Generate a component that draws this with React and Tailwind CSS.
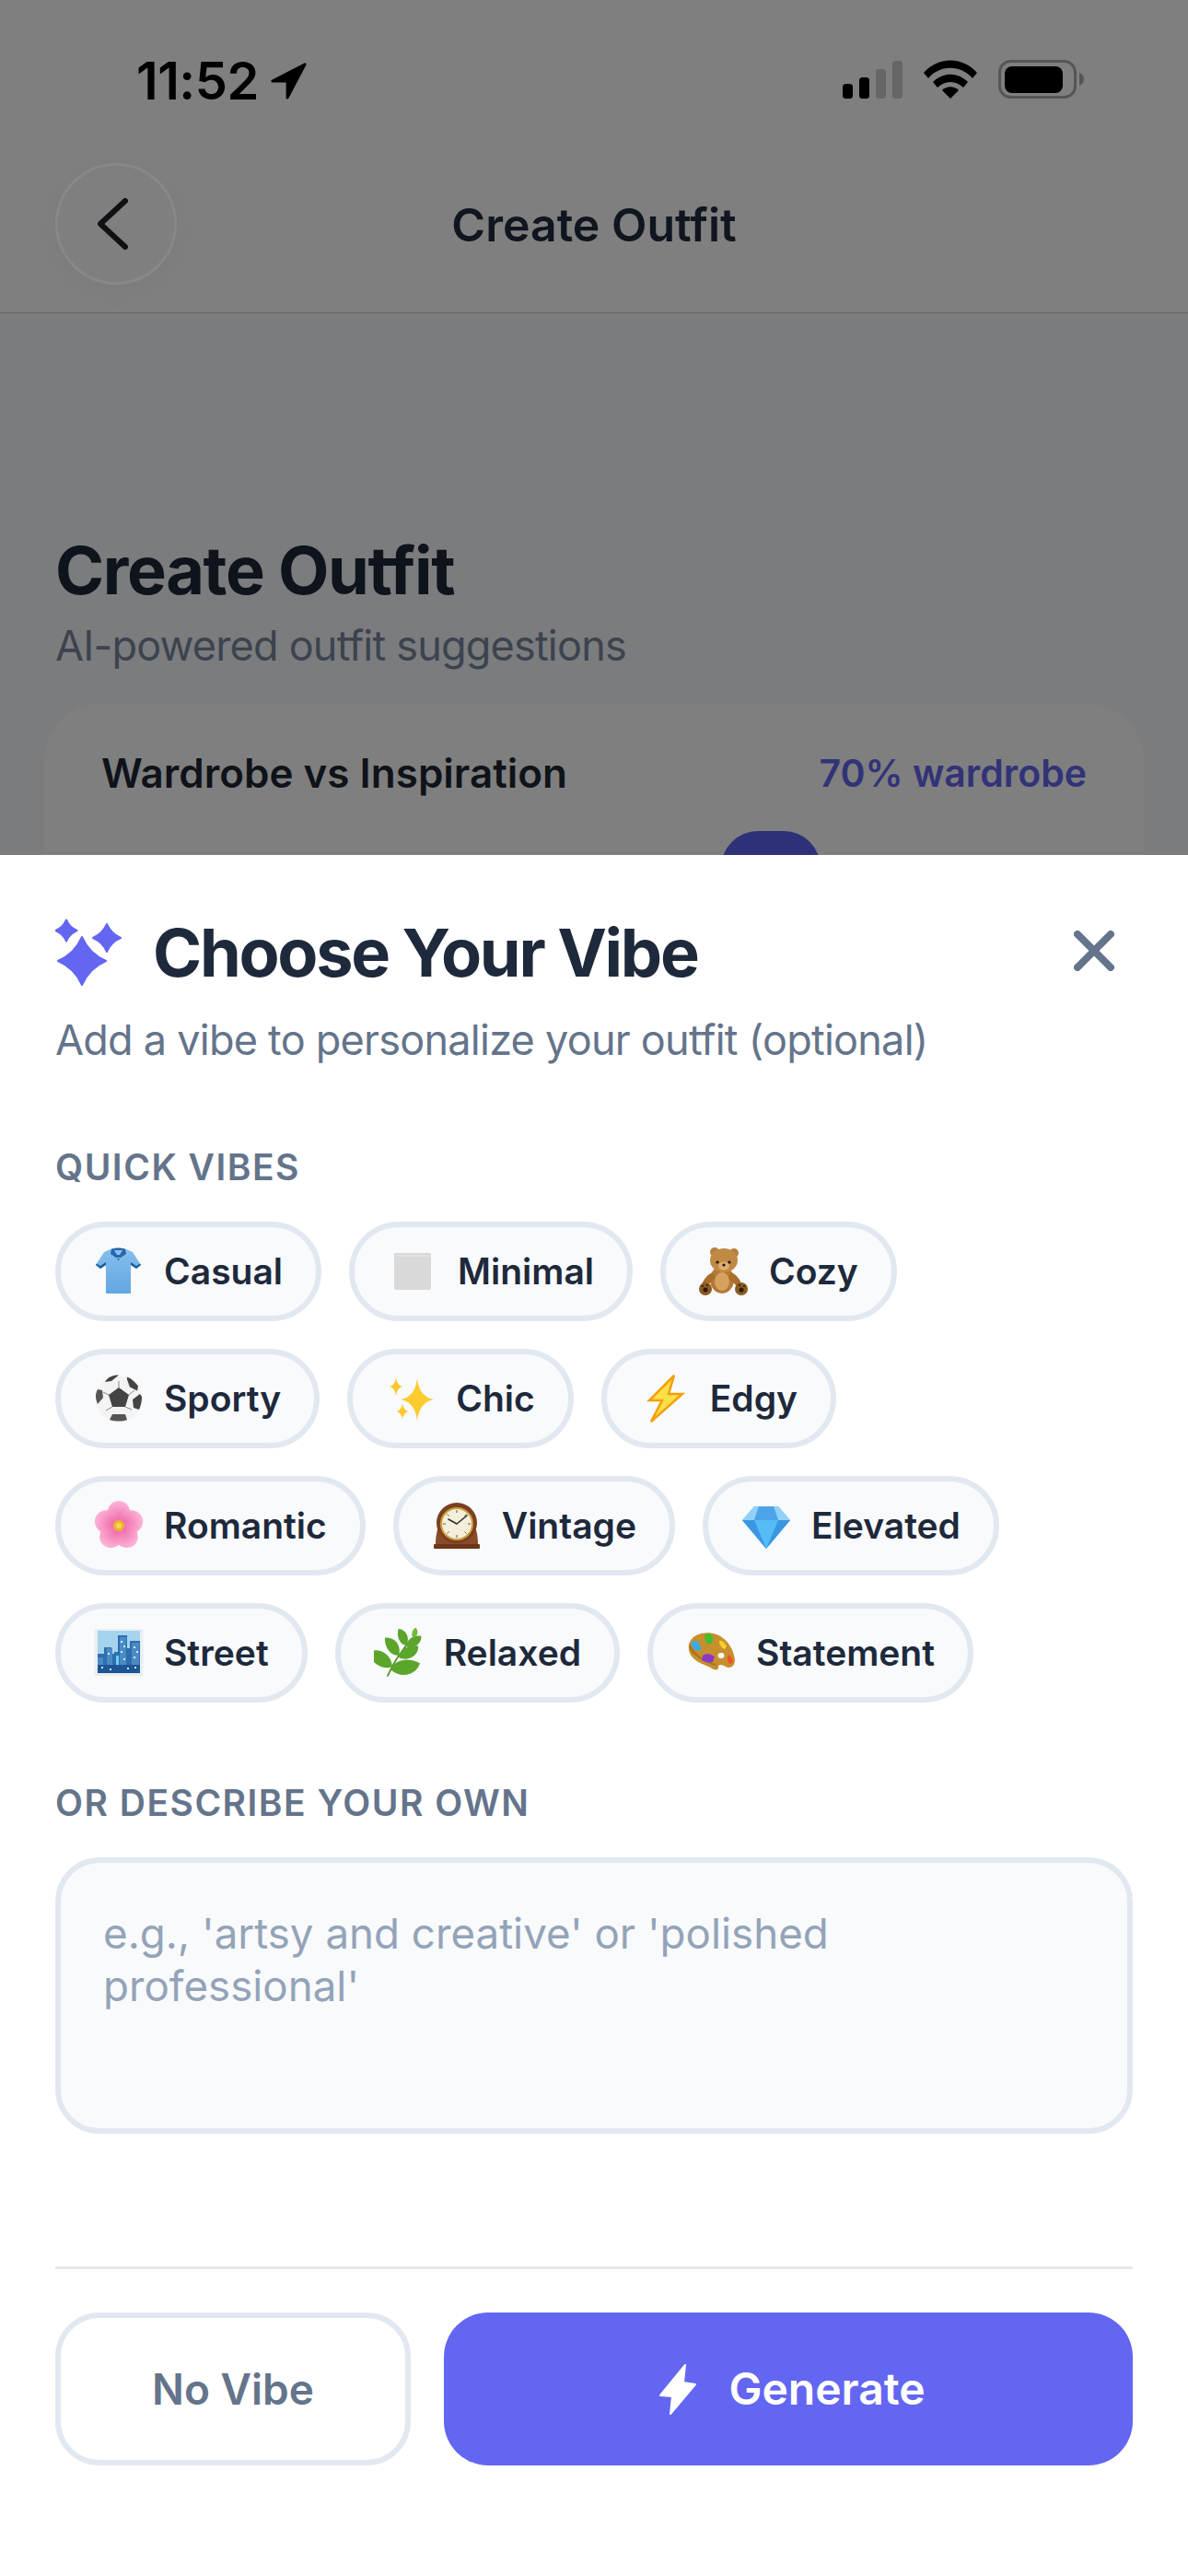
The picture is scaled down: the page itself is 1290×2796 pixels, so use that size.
function starPath(x, y, r, w = r, k = 0.16) {
  return `M${x} ${y - r}Q${x + w * k} ${y - r * k} ${x + w} ${y}Q${x + w * k} ${y + r * k} ${x} ${y + r}Q${x - w * k} ${y + r * k} ${x - w} ${y}Q${x - w * k} ${y - r * k} ${x} ${y - r}z`;
}

function Shirt() {
  return (
    <svg viewBox="0 0 54 54" className="h-full w-full">
      <defs>
        <linearGradient id="shirtFill" x1="0" y1="0" x2="0" y2="1">
          <stop offset="0" stopColor="#86bfec" />
          <stop offset="1" stopColor="#62a6e2" />
        </linearGradient>
      </defs>
      <path d="M20 2 11 6 2 20l5 4 6-4 0 31h27l0-31 6 4 5-4-9-14-9-4-7 3z" fill="url(#shirtFill)" />
      <path d="M2 20l5 4 6-4v-3l-6 4-4-2.500zM51 20l-5 4-6-4v-3l6 4 4-2.500z" fill="#1c5c9e" />
      <path d="M19 3c3-2 12-2 15 0l1 5-6 4h-5l-6-4z" fill="#2467ad" />
      <path d="M22 4h9l-3 5h-3z" fill="#8fc0ea" />
      <circle cx="26.500" cy="14" r="1" fill="#2467ad" />
    </svg>
  );
}

function GreySquare() {
  return (
    <svg viewBox="0 0 54 54" className="h-full w-full">
      <rect x="7" y="7" width="40" height="40" rx="2" fill="#d9d9d9" />
      <rect x="9" y="9" width="36" height="2" fill="#e2e2e2" />
    </svg>
  );
}

function Teddy() {
  return (
    <svg viewBox="0 0 54 54" className="h-full w-full">
      <circle cx="17" cy="6" r="5" fill="#b87f3c" />
      <circle cx="38" cy="7" r="5" fill="#b87f3c" />
      <ellipse cx="25" cy="36" rx="13" ry="15" fill="#b47a35" />
      <ellipse cx="25" cy="38" rx="8" ry="10" fill="#d7a25f" />
      <path d="M15 28C9 30 5 36 3 41l5 3c3-4 8-8 10-10z" fill="#a86f2d" />
      <path d="M35 28c5 2 9 7 11 12l-5 3c-3-3-7-7-9-9z" fill="#a86f2d" />
      <ellipse cx="27" cy="15" rx="15" ry="13" fill="#c08a45" />
      <ellipse cx="27" cy="21" rx="6" ry="4.500" fill="#dcae72" />
      <circle cx="20" cy="17" r="1.600" fill="#22140a" />
      <circle cx="33" cy="17" r="1.600" fill="#22140a" />
      <circle cx="27" cy="20" r="1.600" fill="#22140a" />
      <circle cx="7" cy="46" r="7" fill="#8a5a24" />
      <circle cx="46" cy="46" r="7" fill="#8a5a24" />
      <circle cx="7" cy="47" r="2.500" fill="#2a1a0c" />
      <circle cx="46" cy="47" r="2.500" fill="#2a1a0c" />
      <circle cx="4" cy="43" r="1" fill="#2a1a0c" />
      <circle cx="9" cy="42" r="1" fill="#2a1a0c" />
      <circle cx="44" cy="42" r="1" fill="#2a1a0c" />
      <circle cx="49" cy="43" r="1" fill="#2a1a0c" />
    </svg>
  );
}

function Ball() {
  return (
    <svg viewBox="0 0 54 54" className="h-full w-full">
      <circle cx="27" cy="27" r="25" fill="#f3f3f3" />
      <path d="M27 15l11 8-4 13H20l-4-13z" fill="#444" />
      <path d="M17 4c3-2 6-2.500 10-2.500L19 8l-7 1c1-2 3-4 5-5.500z" fill="#444" />
      <path d="M36 3.500c5 2 9 6 12 10l-1 5-8-4-3-8z" fill="#444" />
      <path d="M2 25c0-3 .5-5 2-8l5 1 1 8-6 7c-1-3-2-5-2-8z" fill="#555" />
      <path d="M52 25c0 5-1 10-3 14l-6-2-1-9 8-6z" fill="#444" />
      <path d="M17 50l3-6h14l2 6c-5 2-13 2-19 0z" fill="#555" />
      <path d="M27 15V8M38 23l6-5M34 36l7 3M20 36l-7 4M16 23l-6-3" stroke="#888" strokeWidth="1" />
    </svg>
  );
}

function Sparkles() {
  return (
    <svg viewBox="0 0 54 54" className="h-full w-full">
      <path d={starPath(34, 28, 23, 18, 0.12)} fill="#fccb2e" />
      <path d={starPath(11, 14, 10, 7, 0.14)} fill="#fdc72c" />
      <path d={starPath(18, 41, 9, 6.500, 0.14)} fill="#fdc72c" />
    </svg>
  );
}

function Bolt() {
  return (
    <svg viewBox="0 0 54 54" className="h-full w-full">
      <path d="M37 2 10 29h14L12 52l34-30H31z" fill="#fde047" stroke="#f59e0b" strokeWidth="2.500" strokeLinejoin="miter" />
    </svg>
  );
}

function Blossom() {
  const angles = [0, 72, 144, 216, 288];
  return (
    <svg viewBox="0 0 54 54" className="h-full w-full">
      <defs>
        <radialGradient id="petal" cx="0.5" cy="0.9" r="0.9">
          <stop offset="0" stopColor="#ee5fa5" />
          <stop offset="1" stopColor="#fdb6d8" />
        </radialGradient>
      </defs>
      {angles.map((a) => (
        <ellipse key={a} cx="27" cy="13.500" rx="12.500" ry="13.500" fill="url(#petal)" transform={`rotate(${a} 27 27)`} />
      ))}
      <circle cx="27" cy="27" r="6" fill="#eab52d" />
      <circle cx="27" cy="27" r="3" fill="#f7d651" />
    </svg>
  );
}

function Clock() {
  return (
    <svg viewBox="0 0 54 54" className="h-full w-full">
      <path d="M4 48c0-8 1-16 4-21h38c3 5 4 13 4 21z" fill="#8a4b2a" />
      <circle cx="27" cy="24" r="22" fill="#7b3f22" />
      <rect x="2" y="47" width="50" height="5" rx="1" fill="#6d3519" />
      <circle cx="27" cy="25" r="17" fill="#f4eeda" stroke="#c9a13c" strokeWidth="2" />
      <path d="M27 25l-9-5M27 25l11-9" stroke="#33302c" strokeWidth="1.600" strokeLinecap="round" />
      <path d="M27 10v3M27 37v3M12 25h3M39 25h3M16.500 14.500l2 2M37.500 14.500l-2 2M16.500 35.500l2-2M37.500 35.500l-2-2" stroke="#5a5650" strokeWidth="1" />
    </svg>
  );
}

function Gem() {
  return (
    <svg viewBox="0 0 54 54" className="h-full w-full">
      <path d="M14 6h26l13 15-26 31L1 21z" fill="#5db5f3" />
      <path d="M14 6 1 21h13l5-15zM40 6l13 15H40l-5-15z" fill="#8fd1fa" />
      <path d="M19 6h16l5 15H14z" fill="#4da3e8" />
      <path d="M14 21h26L27 52z" fill="#55bcf5" />
      <path d="M1 21h13l13 31zM53 21H40L27 52z" fill="#3a97e2" />
    </svg>
  );
}

function City() {
  return (
    <svg viewBox="0 0 54 54" className="h-full w-full">
      <rect x="0.500" y="1" width="53" height="51" fill="#e9eef2" />
      <rect x="4" y="3" width="46" height="46" fill="#a5d3ec" />
      <path d="M4 28h7v-7h8v7h3v-2h4V8h10v14h3V14h11v35H4z" fill="#2f6eae" />
      <path d="M4 32h6v17H4zM14 22h6v27h-6zM28 10h7v39h-7zM41 16h8v33h-8z" fill="#4a8bc5" />
      <rect x="24" y="30" width="3" height="19" fill="#6cd0f2" />
      <path d="M4 40h46v9H4z" fill="#1d5595" />
      <path d="M15 27h2v2h-2zM29 14h2v2h-2zM32 19h2v2h-2zM29 25h2v2h-2zM43 20h2v2h-2zM46 25h2v2h-2zM43 31h2v2h-2zM32 33h2v2h-2zM17 44h2v2h-2zM36 43h2v2h-2zM8 42h2v2H8zM44 42h2v2h-2z" fill="#d5ecfa" />
    </svg>
  );
}

function Herb() {
  const leaf = "M0 0C4-8 15-9 23-4 20 5 8 8 0 0z";
  return (
    <svg viewBox="0 0 54 54" className="h-full w-full">
      <path d="M15 52C20 40 28 26 44 9" stroke="#5a8f25" strokeWidth="1.800" fill="none" strokeLinecap="round" />
      <g fill="#5aa52a">
        <path transform="translate(18 45) rotate(-2) scale(1.400)" d={leaf} />
        <path transform="translate(20 42) rotate(-140) scale(1.300)" d={leaf} />
        <path transform="translate(27 32) rotate(-20) scale(1.050)" d={leaf} />
        <path transform="translate(27 30) rotate(-118) scale(1.050)" d={leaf} />
        <path transform="translate(35 20) rotate(-25) scale(.85)" d={leaf} />
        <path transform="translate(35 19) rotate(-105) scale(.85)" d={leaf} />
        <path transform="translate(43 11) rotate(-70) scale(.5)" d={leaf} fill="#72bb38" />
      </g>
    </svg>
  );
}

function Palette() {
  return (
    <svg viewBox="0 0 54 54" className="h-full w-full">
      <path d="M3 18C6 6 22 3 33 7c11 4 19 16 20 28 0 6-5 10-10 7-3-2-6-3-8-1 1 4-2 6-7 3-4-3-14-5-20-11C4 29 2 24 3 18z" fill="#c78f2d" />
      <path d="M4 17c5 8 10 17 28 22l1 3c-6-3-15-5-21-11C6 27 3 23 4 17z" fill="#a8741f" />
      <ellipse cx="38" cy="30" rx="3.500" ry="3" fill="#f8fafc" />
      <path d="M5 17c2-4 7-4 9 0l3 6c-3 2-6 2-8 0z" fill="#35aee8" />
      <path d="M20 8c3-3 8-2 9 1l-1 8c-3 1-6 0-7-3z" fill="#3fbf30" />
      <path d="M36 14c3-1 6 2 8 6l-2 3c-3-1-6-4-6-9z" fill="#fbd02c" />
      <path d="M46 29c2 1 5 5 5 8l-3 2c-3-1-4-6-2-10z" fill="#f0502c" />
      <path d="M18 30c3-3 9-2 13 1l-2 6c-4 1-9 0-12-2z" fill="#8a37c9" />
    </svg>
  );
}

const vibes = [
  { label: "Casual", Icon: Shirt },
  { label: "Minimal", Icon: GreySquare },
  { label: "Cozy", Icon: Teddy },
  { label: "Sporty", Icon: Ball },
  { label: "Chic", Icon: Sparkles },
  { label: "Edgy", Icon: Bolt },
  { label: "Romantic", Icon: Blossom },
  { label: "Vintage", Icon: Clock },
  { label: "Elevated", Icon: Gem },
  { label: "Street", Icon: City },
  { label: "Relaxed", Icon: Herb },
  { label: "Statement", Icon: Palette },
];

function StatusBar() {
  return (
    <div className="flex h-[177px] items-start justify-between pl-[148px] pr-[113px] pt-[62px]">
      <div className="flex items-center gap-[10px]">
        <span className="text-[56px] font-semibold leading-[52px] tracking-[-0.500px] text-black">11:52</span>
        <svg viewBox="0 0 44 44" className="h-[42px] w-[44px]" fill="#000" stroke="#000" strokeWidth="3" strokeLinejoin="round" aria-hidden>
          <path d="M41 3 4 22h17v19z" />
        </svg>
      </div>
      <div className="flex items-end gap-[23px] pt-[3px]">
        <svg viewBox="0 0 65 41" className="h-[41px] w-[65px]" aria-hidden>
          <rect x="0" y="25" width="11" height="16" rx="3.500" fill="#000" />
          <rect x="18" y="18" width="11" height="23" rx="3.500" fill="#000" />
          <rect x="36" y="9" width="11" height="32" rx="3.500" fill="#666" />
          <rect x="54" y="0" width="11" height="41" rx="3.500" fill="#666" />
        </svg>
        <svg viewBox="0 0 58 42" className="h-[42px] w-[58px]" aria-hidden>
          <path d="M0 14C16-4 42-4 58 14l-5 6C40 5 18 5 5 20z" fill="#000" />
          <path d="M10 24c11-11 27-11 38 0l-5 6c-8-8-20-8-28 0z" fill="#000" />
          <path d="M20 33c5-5 13-5 18 0l-9 9z" fill="#000" />
        </svg>
        <svg viewBox="0 0 93 42" className="h-[42px] w-[93px]" aria-hidden>
          <rect x="1.500" y="1.500" width="82" height="39" rx="12" fill="none" stroke="#555" strokeWidth="3" />
          <rect x="7" y="7" width="63" height="29" rx="8" fill="#000" />
          <path d="M88 14c3 1 5 4 5 7s-2 6-5 7z" fill="#555" />
        </svg>
      </div>
    </div>
  );
}

function Backdrop() {
  return (
    <div className="h-[928px] overflow-hidden bg-[#7b7c7e]">
      <div className="h-[340px] border-b-[1.500px] border-[#666] bg-[#7f7f7f]">
        <StatusBar />
        <div className="relative flex h-[132px] items-center justify-center">
          <div className="absolute left-[60px] top-0 flex h-[132px] w-[132px] items-center justify-center rounded-full border-[3px] border-[#888] bg-[#7f7f7f] shadow-[0_6px_30px_rgba(0,0,0,0.03)]">
            <svg viewBox="0 0 33 56" className="h-[56px] w-[33px] -translate-x-[4px]" fill="none" stroke="#0f1114" strokeWidth="6" strokeLinecap="round" strokeLinejoin="round" aria-hidden>
              <path d="M30 3 3 28l27 25" />
            </svg>
          </div>
          <span className="pt-[2px] text-[50px] font-semibold leading-[60px] text-[#10151f]">Create Outfit</span>
        </div>
      </div>
      <div className="px-[48px] pt-[236px]">
        <h1 className="pl-[12px] text-[72px] font-bold leading-[86px] tracking-[-1.400px] text-[#0f141c]">Create Outfit</h1>
        <p className="mt-[12px] pl-[12px] text-[45px] leading-[54px] tracking-[-0.800px] text-[#3c434e]">AI-powered outfit suggestions</p>
        <div className="mt-[36px] h-[300px] rounded-[60px] bg-[#7f7f7f] px-[62px] pt-[48px]">
          <div className="flex items-center justify-between">
            <span className="text-[44px] font-semibold leading-[54px] text-[#0f1319]">Wardrobe vs Inspiration</span>
            <span className="text-[41px] font-semibold leading-[54px] text-[#313378]">70% wardrobe</span>
          </div>
          <div className="ml-[673px] mt-[36px] h-[108px] w-[108px] rounded-[40px] bg-[#2f3178]" />
        </div>
      </div>
    </div>
  );
}

export default function App() {
  return (
    <div className="relative h-[2796px] w-[1290px] overflow-hidden bg-white font-['Inter',sans-serif]">
      <Backdrop />

      {/* Bottom sheet */}
      <div className="absolute inset-x-0 top-[928px] bottom-0 rounded-t-[72px] bg-white px-[60px] pt-[64px]">
        <div className="flex items-center">
          <svg viewBox="0 0 72 74" className="mr-[34px] h-[74px] w-[72px] text-[#6366f1]" fill="currentColor" stroke="currentColor" strokeWidth="2" strokeLinejoin="round" aria-hidden>
            <path d={starPath(29, 46, 26, 26, 0.3)} />
            <path d={starPath(12, 13, 11.500, 11.500, 0.3)} />
            <path d={starPath(56, 21, 15, 15, 0.3)} />
          </svg>
          <h2 className="flex-1 text-[72px] font-bold leading-[84px] tracking-[-2.300px] text-[#1e293b]">Choose Your Vibe</h2>
          <svg viewBox="0 0 44 44" className="mr-[20px] h-[44px] w-[44px] -translate-y-[2px] text-[#64748b]" fill="none" stroke="currentColor" strokeWidth="8" strokeLinecap="round" aria-hidden>
            <path d="M4 4l36 36M40 4 4 40" />
          </svg>
        </div>
        <p className="mt-[25px] text-[45px] leading-[56px] tracking-[-0.750px] text-[#64748b]">Add a vibe to personalize your outfit (optional)</p>

        <p className="mt-[87px] text-[39px] font-semibold leading-[46px] tracking-[1.500px] text-[#64748b]">QUICK VIBES</p>
        <div className="mt-[36px] flex flex-wrap gap-[30px] pr-[100px]">
          {vibes.map(({ label, Icon }) => (
            <button
              key={label}
              type="button"
              className="flex h-[108px] items-center gap-[22px] rounded-full border-[6px] border-[#e2e8f0] bg-[#f8fafc] px-[36px]"
            >
              <span className="h-[54px] w-[54px]">
                <Icon />
              </span>
              <span className="text-[39px] font-semibold leading-[50px] text-[#1e293b]">{label}</span>
            </button>
          ))}
        </div>

        <p className="mt-[86px] text-[39px] font-semibold leading-[46px] tracking-[1.500px] text-[#64748b]">OR DESCRIBE YOUR OWN</p>
        <div className="mt-[36px] h-[300px] rounded-[48px] border-[6px] border-[#e2e8f0] bg-[#f8fafc] px-[46px] pt-[48px]">
          <p className="text-[45.700px] leading-[57px] text-[#94a3b8]">e.g., 'artsy and creative' or 'polished professional'</p>
        </div>

        <div className="mt-[144px] flex gap-[36px] border-t-[3px] border-[#e5e7eb] pt-[47px]">
          <button type="button" className="flex h-[166px] w-[386px] items-center justify-center rounded-[48px] border-[6px] border-[#e2e8f0] bg-white text-[46px] font-semibold text-[#64748b]">
            No Vibe
          </button>
          <button type="button" className="flex h-[166px] flex-1 items-center justify-center gap-[34px] rounded-[48px] bg-[#6366f1] pl-[8px] text-[48px] font-semibold text-white">
            <svg viewBox="0 0 42 57" className="h-[57px] w-[42px]" fill="currentColor" stroke="currentColor" strokeWidth="2" strokeLinejoin="round" aria-hidden>
              <path d="M29 2 2 35l13 1-2 19 27-32-13-2z" />
            </svg>
            Generate
          </button>
        </div>
      </div>
    </div>
  );
}
